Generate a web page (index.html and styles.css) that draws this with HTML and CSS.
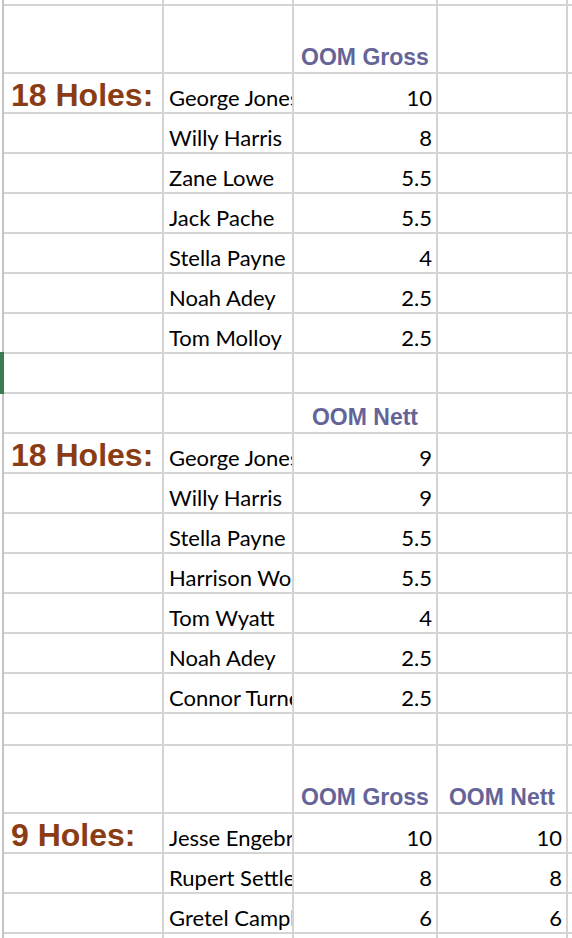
FILE: index.html
```html
<!DOCTYPE html>
<html>
<head>
<meta charset="utf-8">
<link rel="stylesheet" href="styles.css">
</head>
<body>
<div class="sheet">
  <div class="marker"></div>
  <div class="grid">
    <!-- partial top row -->
    <div class="c"></div><div class="c"></div><div class="c"></div><div class="c"></div><div class="c"></div>
    <!-- header 1 -->
    <div class="c"></div><div class="c"></div><div class="c hd">OOM Gross</div><div class="c"></div><div class="c"></div>
    <!-- group 1 -->
    <div class="c label">18 Holes:</div><div class="c name">George Jones</div><div class="c num">10</div><div class="c"></div><div class="c"></div>
    <div class="c"></div><div class="c name">Willy Harris</div><div class="c num">8</div><div class="c"></div><div class="c"></div>
    <div class="c"></div><div class="c name">Zane Lowe</div><div class="c num">5.5</div><div class="c"></div><div class="c"></div>
    <div class="c"></div><div class="c name">Jack Pache</div><div class="c num">5.5</div><div class="c"></div><div class="c"></div>
    <div class="c"></div><div class="c name">Stella Payne</div><div class="c num">4</div><div class="c"></div><div class="c"></div>
    <div class="c"></div><div class="c name">Noah Adey</div><div class="c num">2.5</div><div class="c"></div><div class="c"></div>
    <div class="c"></div><div class="c name">Tom Molloy</div><div class="c num">2.5</div><div class="c"></div><div class="c"></div>
    <!-- empty -->
    <div class="c"></div><div class="c"></div><div class="c"></div><div class="c"></div><div class="c"></div>
    <!-- header 2 -->
    <div class="c"></div><div class="c"></div><div class="c hd">OOM Nett</div><div class="c"></div><div class="c"></div>
    <!-- group 2 -->
    <div class="c label">18 Holes:</div><div class="c name">George Jones</div><div class="c num">9</div><div class="c"></div><div class="c"></div>
    <div class="c"></div><div class="c name">Willy Harris</div><div class="c num">9</div><div class="c"></div><div class="c"></div>
    <div class="c"></div><div class="c name">Stella Payne</div><div class="c num">5.5</div><div class="c"></div><div class="c"></div>
    <div class="c"></div><div class="c name">Harrison Wood</div><div class="c num">5.5</div><div class="c"></div><div class="c"></div>
    <div class="c"></div><div class="c name">Tom Wyatt</div><div class="c num">4</div><div class="c"></div><div class="c"></div>
    <div class="c"></div><div class="c name">Noah Adey</div><div class="c num">2.5</div><div class="c"></div><div class="c"></div>
    <div class="c"></div><div class="c name">Connor Turner</div><div class="c num">2.5</div><div class="c"></div><div class="c"></div>
    <!-- empty -->
    <div class="c"></div><div class="c"></div><div class="c"></div><div class="c"></div><div class="c"></div>
    <!-- header 3 -->
    <div class="c"></div><div class="c"></div><div class="c hd">OOM Gross</div><div class="c hd">OOM Nett</div><div class="c"></div>
    <!-- group 3 -->
    <div class="c label">9 Holes:</div><div class="c name">Jesse Engebretsen</div><div class="c num">10</div><div class="c num">10</div><div class="c"></div>
    <div class="c"></div><div class="c name">Rupert Settler</div><div class="c num">8</div><div class="c num">8</div><div class="c"></div>
    <div class="c"></div><div class="c name">Gretel Campbell</div><div class="c num">6</div><div class="c num">6</div><div class="c"></div>
    <!-- partial bottom row -->
    <div class="c"></div><div class="c"></div><div class="c"></div><div class="c"></div><div class="c"></div>
  </div>
</div>
</body>
</html>
```
FILE: styles.css
```css
html, body {
  margin: 0;
  padding: 0;
  background: #ffffff;
}
body {
  width: 572px;
  height: 938px;
  overflow: hidden;
}
.sheet {
  position: relative;
  padding-left: 2px;
}
.marker {
  position: absolute;
  left: 0;
  top: 352px;
  width: 4px;
  height: 42px;
  background: #3c7a4f;
}
.grid {
  display: grid;
  border-left: 2px solid #c4c4c4;
  background: #d4d4d4;
  column-gap: 2px;
  row-gap: 2px;
  grid-template-columns: 158px 128px 142px 128px 10px;
  grid-template-rows:
    4px 66px
    repeat(7, 38px)
    38px 38px
    repeat(7, 38px)
    30px 66px
    repeat(3, 38px)
    20px;
  height: 960px;
}
.c {
  background: #ffffff;
  overflow: hidden;
  white-space: nowrap;
  display: flex;
  align-items: flex-end;
  min-width: 0;
}
.name, .num {
  font-family: Lato, "Noto Sans", sans-serif;
  font-size: 22px;
  line-height: 22px;
  color: #000000;
  padding: 0 4px 3px 5px;
}
.num {
  justify-content: flex-end;
}
.label {
  font-family: "Liberation Sans", Arial, sans-serif;
  font-weight: bold;
  font-size: 32px;
  line-height: 32px;
  color: #8a3d14;
  padding: 0 0 1px 7px;
  overflow: visible;
}
.hd {
  font-family: "Liberation Sans", Arial, sans-serif;
  font-weight: bold;
  font-size: 23px;
  line-height: 23px;
  color: #646498;
  justify-content: center;
  padding-bottom: 3px;
  overflow: visible;
}
```
